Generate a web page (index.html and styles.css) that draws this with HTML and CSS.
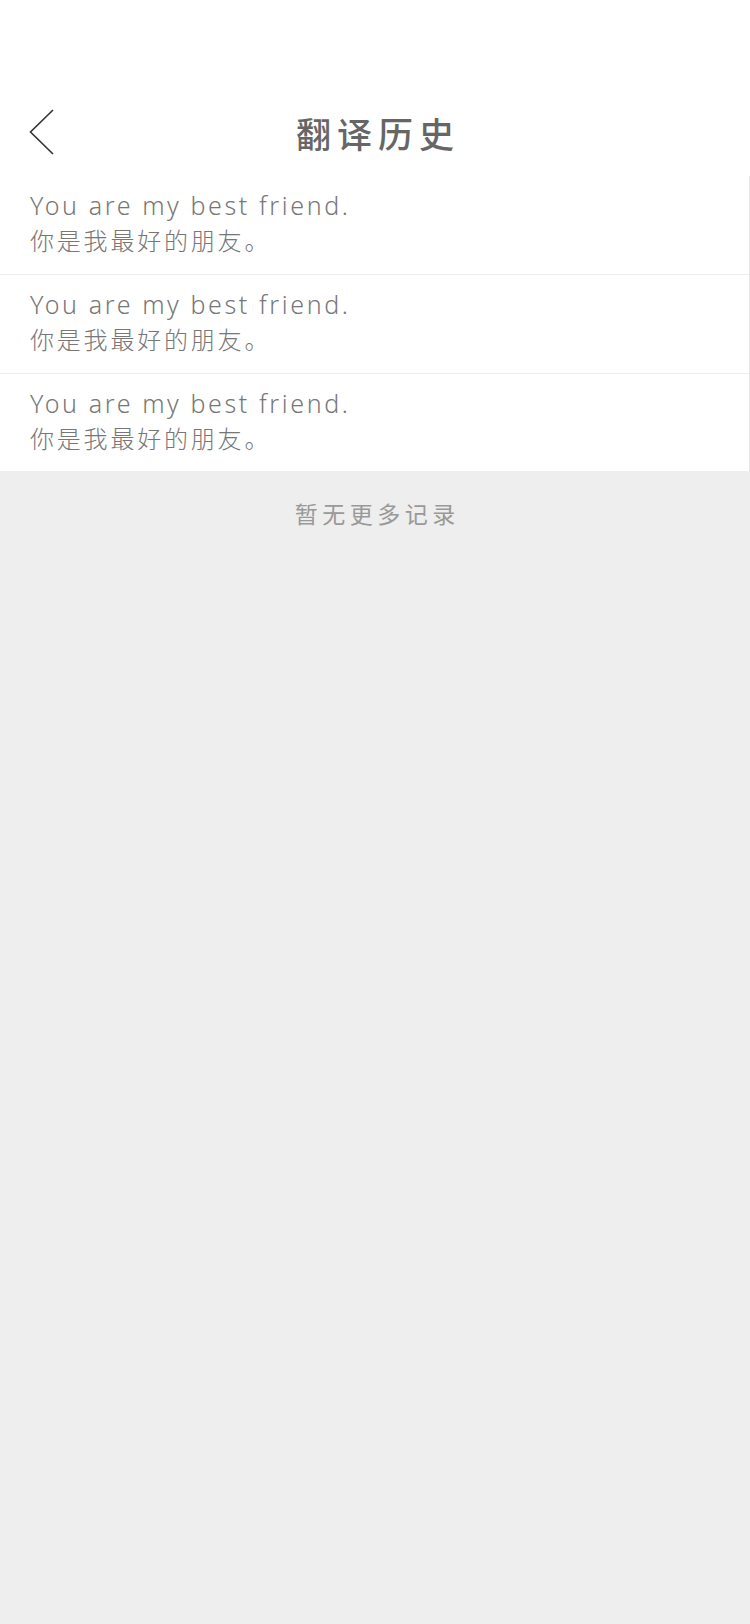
FILE: index.html
```html
<html>

<head>
    <meta charset="utf-8">
    <link rel="stylesheet" href="styles.css">
</head>

<body>
    <div class="header">
        <div class="nav">
            <a class="back" href="#">
                <svg width="28" height="46" viewBox="0 0 28 46">
                    <polyline points="25,1 2.5,23 25,45" fill="none" stroke="#333" stroke-width="1.6" />
                </svg>
            </a>
            <div class="title">翻译历史</div>
        </div>
    </div>
    <div class="list">
        <div class="item">
            <div class="en">You are my best friend.</div>
            <div class="zh">你是我最好的朋友。</div>
        </div>
        <div class="item">
            <div class="en">You are my best friend.</div>
            <div class="zh">你是我最好的朋友。</div>
        </div>
        <div class="item">
            <div class="en">You are my best friend.</div>
            <div class="zh">你是我最好的朋友。</div>
        </div>
    </div>
    <div class="empty">暂无更多记录</div>
</body>

</html>
```

FILE: styles.css
```css
body{
    margin: 0;
    background: #eeeeee;
    font-family: "Noto Sans", "Noto Sans CJK SC", sans-serif;
}

.header{
    background: #fff;
    padding-top: 88px;
}

.nav{
    height: 88px;
    display: flex;
    align-items: center;
    justify-content: center;
    position: relative;
}

.back{
    position: absolute;
    left: 28px;
    top: 21px;
    display: block;
    width: 28px;
    height: 46px;
}

.title{
    font-size: 35px;
    font-weight: 500;
    color: #666;
    letter-spacing: 6px;
    padding-left: 6px;
}

.list{
    background: #fff;
    border-right: 1px solid #e6e6e6;
}

.item{
    height: 99px;
    box-sizing: border-box;
    padding: 12px 30px 0;
    border-bottom: 1px solid #eeeeee;
}

.item:last-child{
    border-bottom: none;
    height: 97px;
}

.en{
    font-size: 25px;
    font-weight: 300;
    color: #777;
    letter-spacing: 2.6px;
    line-height: 35px;
}

.zh{
    font-size: 24px;
    font-weight: 300;
    color: #777;
    letter-spacing: 2.8px;
    line-height: 35px;
}

.empty{
    text-align: center;
    font-size: 23px;
    color: #999;
    letter-spacing: 4.5px;
    padding-left: 4.5px;
    padding-top: 25px;
}
```
